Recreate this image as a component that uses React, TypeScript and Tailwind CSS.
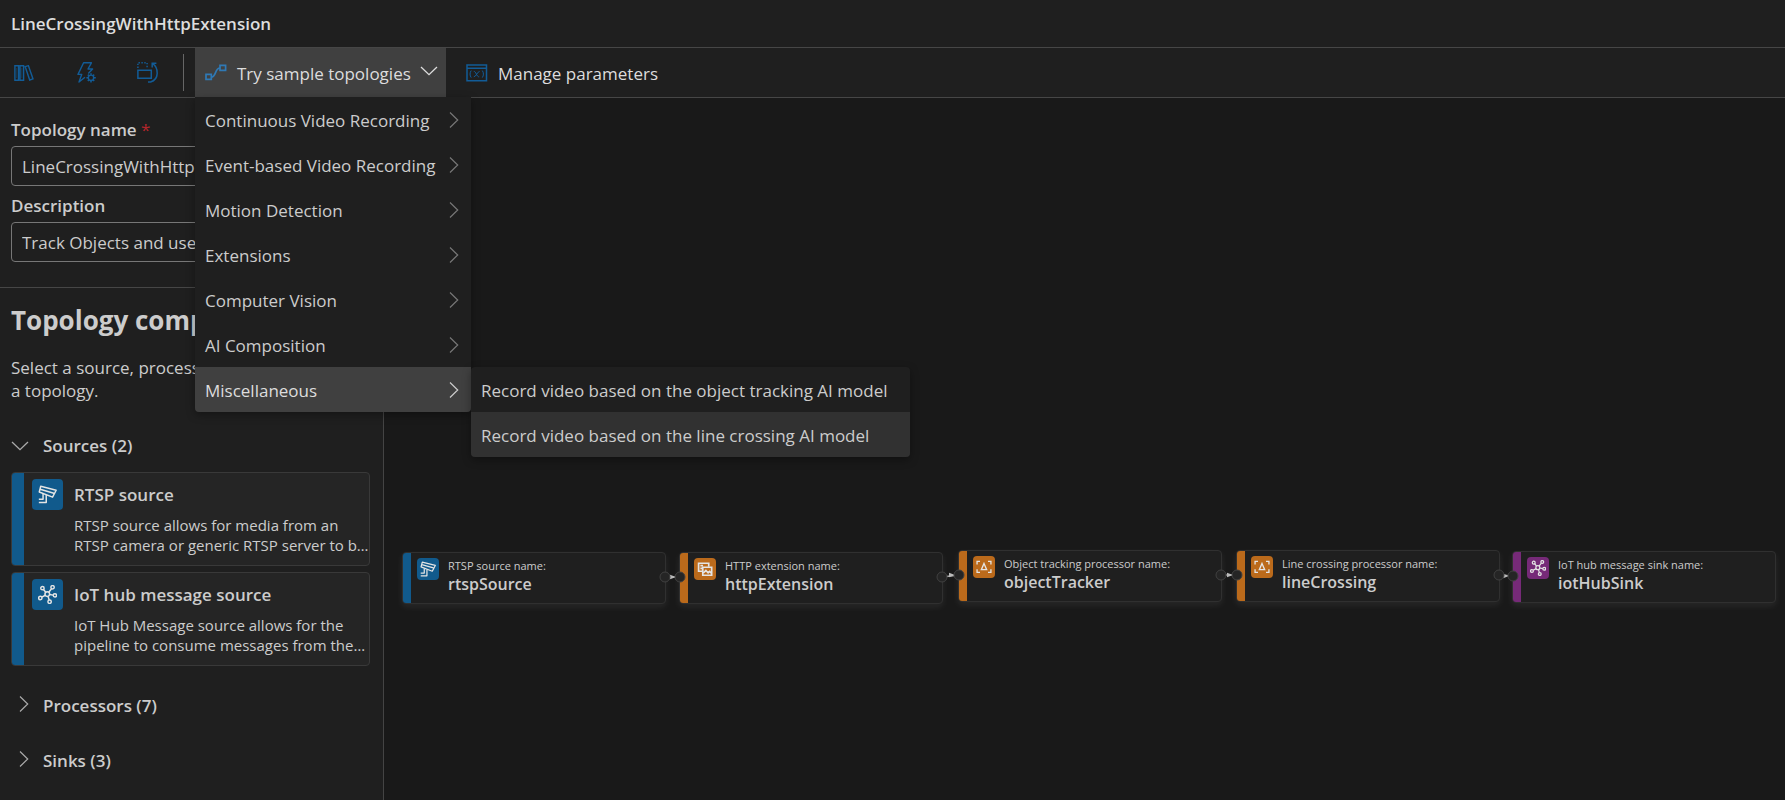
import type { ReactNode } from "react";

type IconProps = { className?: string };

function ChevronRight({ className = "" }: IconProps) {
  return (
    <svg viewBox="0 0 10 18" className={`h-[18px] w-[10px] shrink-0 ${className}`} fill="none" stroke="currentColor" strokeWidth="1.2" aria-hidden="true">
      <path d="M1 1.5 8.7 9 1 16.5" />
    </svg>
  );
}

function ChevronDown({ className = "" }: IconProps) {
  return (
    <svg viewBox="0 0 18 10" className={`h-[10px] w-[18px] shrink-0 ${className}`} fill="none" stroke="currentColor" strokeWidth="1.3" aria-hidden="true">
      <path d="M1 1 9 8.7 17 1" />
    </svg>
  );
}

function LibraryIcon() {
  return (
    <svg viewBox="0 0 20 16" className="h-4 w-5" fill="none" stroke="currentColor" strokeWidth="1.4" aria-hidden="true">
      <path d="M.9.7h3.6v14.6H.9zM6 .7h3.6v14.6H6zM11.2 1.6l3.2-.9 4.6 13.2-3.3 1.1z" />
      <path d="M2.7 3v10M7.8 3v10" strokeWidth="1" opacity=".4" />
    </svg>
  );
}

function ActionIcon() {
  return (
    <svg viewBox="0 0 20 21" className="h-[21px] w-5" fill="none" stroke="currentColor" strokeWidth="1.4" strokeLinejoin="round" aria-hidden="true">
      <path d="M8 15.2 2 20l2.7-7.6H1L6.6.8h7.8L11 7h4.6l-4.3 4.4" />
      <circle cx="14" cy="15.8" r="2.7" />
      <path d="M14 11.2v1.6M14 18.8v1.6M9.4 15.8H11M17 15.8h1.8M10.8 12.6l1.1 1.1M16.1 17.9l1.1 1.1M10.8 19l1.1-1.1M16.1 13.7l1.1-1.1" strokeWidth="1.5" />
    </svg>
  );
}

function RotateLayoutIcon() {
  return (
    <svg viewBox="0 0 22 21" className="h-[21px] w-[22px]" fill="none" stroke="currentColor" strokeWidth="1.5" aria-hidden="true">
      <path d="M.9 8.2h13.4v8H.9z" />
      <path d="M.9 6V.8h9.2V6" strokeDasharray="1.4 1.5" />
      <path d="M19.4 1.2h-4.2v4.4M15.4 1.4c6.4 4.4 7 16-1.8 18.6H11" />
    </svg>
  );
}

function TopologyIcon() {
  return (
    <svg viewBox="0 0 22 17" className="h-[17px] w-[22px]" fill="none" stroke="currentColor" strokeWidth="1.7" aria-hidden="true">
      <path d="M1 10.3h5.3v5H1zM15 1.3h5.6v5H15z" />
      <path d="M6.3 13c5 0 3.500-9 8.700-9" />
    </svg>
  );
}

function ParametersIcon() {
  return (
    <svg viewBox="0 0 22 18" className="h-[18px] w-[22px]" fill="none" stroke="currentColor" strokeWidth="1.5" aria-hidden="true">
      <path d="M1 1h19.500v15.800H1zM1 4.300h19.500" />
      <path d="M5.200 6.600c-1.500 2-1.500 5 0 7M16.300 6.600c1.500 2 1.500 5 0 7M7.800 7.400c2-.7 3 6 5.400 5.400M13.600 7.400c-2 0-3.600 5.400-5.800 5.400" strokeWidth="1" />
    </svg>
  );
}

function CameraGlyph() {
  return (
    <svg viewBox="0 0 18 18" className="size-full" fill="none" stroke="currentColor" strokeWidth="1.400" strokeLinejoin="round" aria-hidden="true">
      <path d="M2.600 1.200 17.200 5l-3.400 6.500L1.200 6.600zM2 4l13 3.800" />
      <path d="M.8 13.600h4V8.300M.8 16.600h7V9.500" />
    </svg>
  );
}

function HubGlyph() {
  return (
    <svg viewBox="0 0 18 18" className="size-full" fill="none" stroke="currentColor" strokeWidth="1.400" aria-hidden="true">
      <circle cx="8.800" cy="8.600" r="2.200" />
      <circle cx="4.200" cy="3" r="1.600" />
      <circle cx="13.800" cy="2.200" r="1.600" />
      <circle cx="2.200" cy="12.300" r="1.600" />
      <circle cx="16" cy="9.800" r="1.600" />
      <circle cx="11" cy="15.800" r="1.600" />
      <path d="m5.200 4.200 2.200 2.700M12.800 3.600l-2.600 3.200M3.600 11.500l3.300-1.800M14.400 9.600 11 9M10.600 14.200l-1.100-3.500" />
    </svg>
  );
}

function ImagesGlyph() {
  return (
    <svg viewBox="0 0 18 18" className="size-full" fill="none" stroke="currentColor" strokeWidth="1.900" aria-hidden="true">
      <path d="M6 11.500H1.800V2.500h11.400v4M3.800 5.200h3M3.800 8.200h2" />
      <path d="M6.500 7h10v9h-10z" />
      <path d="m7 13.500 3-2.800 2.500 2.500 1.700-1.500 2 2" />
    </svg>
  );
}

function DetectGlyph() {
  return (
    <svg viewBox="0 0 18 18" className="size-full" fill="none" stroke="currentColor" strokeWidth="1.500" aria-hidden="true">
      <path d="M4.500 2.700H1.200v3.500M1.200 11.500v3.500h3.300M13.500 2.700h3.300v3.500M16.800 11.500v3.500h-3.300" />
      <path d="m9 5 3 7H6z" />
    </svg>
  );
}

const sampleGroups = [
  "Continuous Video Recording",
  "Event-based Video Recording",
  "Motion Detection",
  "Extensions",
  "Computer Vision",
  "AI Composition",
];

function SampleMenu() {
  return (
    <div className="absolute left-0 top-full z-20 w-[276px] rounded-b-sm bg-[#1f1f1f] text-[#cccccc] shadow-[0_3px_8px_rgba(0,0,0,0.35)]" role="menu">
      {sampleGroups.map((name) => (
        <button key={name} type="button" role="menuitem" className="flex h-[45px] w-full items-center justify-between whitespace-nowrap pl-2.5 pr-3">
          <span className="pt-0.5">{name}</span>
          <ChevronRight className="text-[#777777]" />
        </button>
      ))}
      <div className="relative">
        <button type="button" role="menuitem" aria-expanded="true" className="flex h-[45px] w-full items-center justify-between rounded-b-sm bg-[#404040] pl-2.5 pr-3 text-[#dddddd]">
          <span className="pt-0.5">Miscellaneous</span>
          <ChevronRight className="text-[#cccccc]" />
        </button>
        <div className="absolute left-full top-0 w-[439px] rounded-sm bg-[#1f1f1f] shadow-[0_3px_8px_rgba(0,0,0,0.35)]" role="menu">
          <button type="button" role="menuitem" className="flex h-[45px] w-full items-center whitespace-nowrap pl-2.5 pt-0.5">
            Record video based on the object tracking AI model
          </button>
          <button type="button" role="menuitem" className="flex h-[45px] w-full items-center whitespace-nowrap rounded-b-sm bg-[#313131] pl-2.5 pt-0.5">
            Record video based on the line crossing AI model
          </button>
        </div>
      </div>
    </div>
  );
}

function Toolbar() {
  return (
    <div className="flex h-[50px] items-stretch border-b border-[#464646] text-[17px]" role="toolbar">
      <div className="flex items-center text-[#125c97]">
        <button type="button" aria-label="Library" className="flex w-[54px] justify-start pl-3.5"><LibraryIcon /></button>
        <button type="button" aria-label="Actions" className="flex w-[66px] justify-center"><ActionIcon /></button>
        <button type="button" aria-label="Rotate layout" className="flex w-[56px] justify-center"><RotateLayoutIcon /></button>
      </div>
      <div className="mx-[7px] my-1.5 w-px bg-[#666666]" />
      <div className="relative ml-1 flex">
        <button type="button" aria-haspopup="menu" aria-expanded="true" className="flex w-[251px] items-center justify-between whitespace-nowrap bg-[#404040] pl-2.5 pr-2 text-[#dddddd]">
          <span className="flex items-center gap-2.5">
            <span className="text-[#2f79b5]"><TopologyIcon /></span>
            <span className="pt-0.5">Try sample topologies</span>
          </span>
          <ChevronDown className="mb-1" />
        </button>
        <SampleMenu />
      </div>
      <button type="button" className="ml-5 flex items-center gap-2.5 text-[#dddddd]">
        <span className="text-[#125c97]"><ParametersIcon /></span>
        <span className="pt-0.5">Manage parameters</span>
      </button>
    </div>
  );
}

function SourceCard({ title, text, icon }: { title: string; text: string; icon: ReactNode }) {
  return (
    <article className="flex h-[94px] overflow-hidden rounded border border-[#393939] bg-[#252525]">
      <div className="-my-px -ml-px w-[13px] shrink-0 bg-[#115a8c]" />
      <div className="ml-2 mt-1.5 flex size-[31px] shrink-0 items-center justify-center rounded bg-[#115a8c] p-1.5 text-[#e4e4e4]">{icon}</div>
      <div className="min-w-0 flex-1 pl-[11px] pt-2">
        <h3 className="text-[17px] font-semibold leading-7">{title}</h3>
        <p className="mt-1.5 line-clamp-2 text-[15px] leading-5">{text}</p>
      </div>
    </article>
  );
}

function Sidebar() {
  return (
    <aside className="w-96 shrink-0 border-r border-[#444444] text-[#cccccc]">
      <form className="border-b border-[#464646] px-[11px] pb-[25px] pt-5 text-[17px]">
        <label htmlFor="topology-name" className="block font-semibold leading-6">
          Topology name <span className="font-normal text-[#b3262b]">*</span>
        </label>
        <input id="topology-name" defaultValue="LineCrossingWithHttpExtension" className="mt-1 block h-10 w-full rounded-sm border border-[#777777] bg-transparent px-2.5 outline-none" />
        <label htmlFor="description" className="mt-2 block font-semibold leading-6">Description</label>
        <input id="description" defaultValue="Track Objects and use Line Crossing" className="mt-1 block h-10 w-full rounded-sm border border-[#777777] bg-transparent px-2.5 outline-none" />
      </form>
      <section className="px-[11px] pt-4">
        <h2 className="text-[26px] font-bold leading-8">Topology components</h2>
        <p className="mt-5 text-[17px] leading-[23px]">Select a source, processor and sink to build a&nbsp;topology.</p>
        <button type="button" aria-expanded="true" className="mt-5 flex h-12 w-full items-center gap-3.5 text-[17px] font-semibold">
          <ChevronDown className="text-[#aaaaaa]" />
          Sources (2)
        </button>
        <div className="mr-0.5 mt-0.5 flex flex-col gap-1.5">
          <SourceCard title="RTSP source" text="RTSP source allows for media from an RTSP camera or generic RTSP server to be ingested into a live pipeline." icon={<CameraGlyph />} />
          <SourceCard title="IoT hub message source" text="IoT Hub Message source allows for the pipeline to consume messages from the IoT Edge Hub." icon={<HubGlyph />} />
        </div>
        <button type="button" aria-expanded="false" className="mt-4 flex h-12 w-full items-center gap-3.5 pl-2 text-[17px] font-semibold">
          <ChevronRight className="mb-1 text-[#aaaaaa]" />
          Processors (7)
        </button>
        <button type="button" aria-expanded="false" className="mt-[7px] flex h-12 w-full items-center gap-3.5 pl-2 text-[17px] font-semibold">
          <ChevronRight className="mb-1 text-[#aaaaaa]" />
          Sinks (3)
        </button>
      </section>
    </aside>
  );
}

const tones = {
  source: "bg-[#115a8c]",
  processor: "bg-[#bb6a1b]",
  sink: "bg-[#762a78]",
};

type GraphNode = { x: number; y: number; label: string; name: string; tone: keyof typeof tones; icon: ReactNode };

const nodes: GraphNode[] = [
  { x: 18, y: 454, label: "RTSP source name:", name: "rtspSource", tone: "source", icon: <CameraGlyph /> },
  { x: 295, y: 454, label: "HTTP extension name:", name: "httpExtension", tone: "processor", icon: <ImagesGlyph /> },
  { x: 574, y: 452, label: "Object tracking processor name:", name: "objectTracker", tone: "processor", icon: <DetectGlyph /> },
  { x: 852, y: 452, label: "Line crossing processor name:", name: "lineCrossing", tone: "processor", icon: <DetectGlyph /> },
  { x: 1128, y: 453, label: "IoT hub message sink name:", name: "iotHubSink", tone: "sink", icon: <HubGlyph /> },
];

const NODE_WIDTH = 263;
const HANDLE_Y = 25;

function Canvas() {
  return (
    <main className="relative min-w-0 flex-1 overflow-hidden bg-[#191919]">
      {nodes.map((node) => (
        <div
          key={node.name}
          className="absolute flex h-[52px] w-[264px] overflow-hidden rounded border border-[#303030] bg-[#1f1f1f] shadow-[0_3px_7px_rgba(255,255,255,0.07)]"
          style={{ left: node.x, top: node.y }}
        >
          <div className={`-my-px -ml-px w-[9px] shrink-0 ${tones[node.tone]}`} />
          <div className={`ml-1.5 mt-[5px] size-[22px] shrink-0 rounded p-[3px] text-[#e4e4e4] ${tones[node.tone]}`}>{node.icon}</div>
          <div className="whitespace-nowrap pl-[9px] pt-[5px] text-[#cccccc]">
            <div className="text-[11px] leading-4">{node.label}</div>
            <div className="text-[16px] font-semibold leading-5">{node.name}</div>
          </div>
        </div>
      ))}
      <svg className="pointer-events-none absolute inset-0 size-full" aria-hidden="true">
        {nodes.slice(1).map((node, i) => {
          const x1 = nodes[i].x + NODE_WIDTH;
          const y1 = nodes[i].y + HANDLE_Y;
          const x2 = node.x + 1;
          const y2 = node.y + HANDLE_Y;
          return (
            <g key={node.name}>
              <line x1={x1} y1={y1} x2={x2} y2={y2} stroke="#aaaaaa" strokeWidth="1.500" />
              <path d={`M${x2 - 4} ${y2}l-6-2.200v4.400z`} fill="#bbbbbb" />
              <circle cx={x1} cy={y1} r="5" fill="#252525" stroke="#414141" />
              <circle cx={x2} cy={y2} r="5" fill="#252525" stroke="#414141" />
            </g>
          );
        })}
      </svg>
    </main>
  );
}

export default function App() {
  return (
    <div className="flex min-h-screen flex-col bg-[#1f1f1f] font-['Segoe_UI','Open_Sans',sans-serif]">
      <header className="flex h-12 items-center border-b border-[#464646] px-[11px]">
        <h1 className="text-[17px] font-semibold text-[#dddddd]">LineCrossingWithHttpExtension</h1>
      </header>
      <Toolbar />
      <div className="flex flex-1">
        <Sidebar />
        <Canvas />
      </div>
    </div>
  );
}
